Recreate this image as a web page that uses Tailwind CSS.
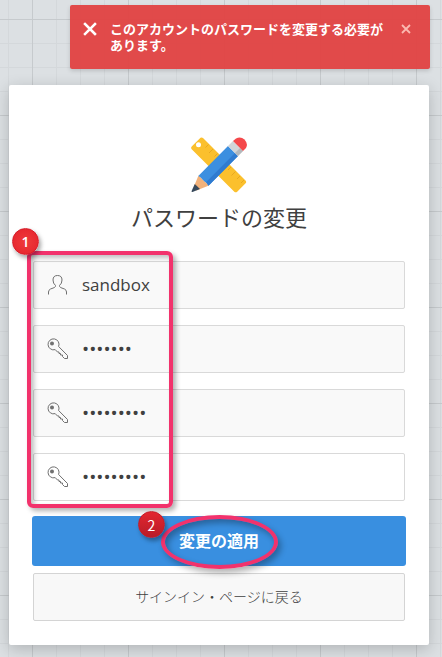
<!DOCTYPE html>
<html lang="ja">
<head>
<meta charset="utf-8">
<meta name="viewport" content="width=device-width, initial-scale=1">
<title>パスワードの変更</title>
<script src="https://cdn.jsdelivr.net/npm/@tailwindcss/browser@4"></script>
</head>
<body class="relative min-h-screen overflow-x-hidden bg-[#dce0e3] font-['Open_Sans','Noto_Sans_CJK_JP',sans-serif] text-[#404040]">

<!-- Graph-paper background -->
<svg class="absolute inset-0 -z-10 h-full w-full" aria-hidden="true">
  <defs>
    <pattern id="grid" x="32" y="19" width="96" height="96" patternUnits="userSpaceOnUse">
      <path d="M24.500 0V96M48.500 0V96M72.500 0V96M0 24.500H96M0 48.500H96M0 72.500H96" stroke="#d4d8db" fill="none"/>
      <path d="M.5 0V96M0 .5H96" stroke="#c6cacd" fill="none"/>
    </pattern>
  </defs>
  <rect width="100%" height="100%" fill="url(#grid)"/>
</svg>

<div class="pt-[5px] pr-3 pb-3 pl-[9px]">
  <div role="alert" class="ml-auto flex h-16 max-w-[360px] items-start rounded-[2px] bg-[#e04646]/98 py-4 pr-4 pl-3 text-white shadow-[0_2px_4px_rgba(0,0,0,0.15)]">
    <svg class="h-4 w-4 shrink-0" viewBox="0 0 16 16" aria-hidden="true"><path d="M3 3L13 13M13 3L3 13" stroke="#fff" stroke-width="2.500" stroke-linecap="square"/></svg>
    <p class="mr-3 ml-3 flex-1 text-[13px] leading-4 font-bold">このアカウントのパスワードを変更する必要があります。</p>
    <button type="button" aria-label="閉じる" class="h-4 w-4 shrink-0"><svg class="h-4 w-4" viewBox="0 0 16 16"><path d="M4 4L12 12M12 4L4 12" stroke="#fbb9b0" stroke-width="1.800"/></svg></button>
  </div>

  <main class="mt-4 max-w-[420px] rounded-[2px] bg-white p-6 shadow-[0_4px_16px_rgba(0,0,0,0.2)]">
    <svg class="mx-auto mt-7 h-14 w-14" viewBox="0 0 56 56" aria-hidden="true">
      <path fill="#fbc02d" fill-rule="evenodd" d="M.7 9.500L9.500 .8Q10.800 0 12 .9L54.500 43.500Q55.800 44.800 54.600 46.200L46.200 54.700Q44.800 56 43.300 54.700L.7 12.200Q-.5 10.800 .7 9.500ZM7.500 5.200a2.500 2.500 0 1 0 0 5 2.500 2.500 0 1 0 0-5Z"/>
      <path stroke="#e8a820" fill="none" d="M17.500 7.500l-3 3M22 12l-4 4M26.500 16.500l-3 3M40 30l-3 3M44.500 34.500l-4 4M49 39l-3 3M53 43l-3 3"/>
      <path fill="#f3b27a" d="M7.500 38.500L18 48.500 5.500 53.500 2.500 50.500Z"/>
      <path fill="#394a5c" d="M3.800 47L9 52 1.500 55Q.2 55.200 .6 54Z"/>
      <path fill="#3c8fe0" d="M37 9L47 19 17.500 48.700Q16 45.500 13.500 44.500L11.500 42.500Q10 40 7.300 38.900Z"/>
      <path fill="#2f7bd0" d="M44 16L47 19 17.500 48.700 15 45.200Z"/>
      <path fill="#d2d5d8" d="M42 4L52 14 47 19 37 9Z"/>
      <path fill="#b4b8bc" d="M49 11L52 14 47 19 44 16Z"/>
      <path fill="#f4484b" d="M42 4L45 1.500Q49.500-1 53.500 2.500 57.500 7 55 11L52 14Z"/>
    </svg>
    <h1 class="mt-2 text-center text-[22px] leading-8 font-normal">パスワードの変更</h1>

    <form class="mt-7" onsubmit="return false">
      <div class="flex flex-col gap-4">
        <div class="flex h-12 items-center rounded-[2px] border border-[#d9d9d9] bg-[#f9f9f9] pl-3">
          <label for="user" aria-label="ユーザー名"><svg class="h-6 w-6" viewBox="0 0 24 24" fill="none" stroke="#707070" aria-hidden="true"><path d="M2.500 21.500V19Q2.500 17 4.500 16L8.500 14.500Q9.500 14 9.500 12.500Q7 10.500 7 7Q7 2.500 11.500 2.500Q16 2.500 16 7Q16 10.500 13.500 12.500Q13.500 14 14.500 14.500L18.500 16Q20.500 17 20.500 19V21.500"/></svg></label>
          <input id="user" type="text" value="sandbox" readonly class="ml-3 min-w-0 flex-1 bg-transparent text-[17px] leading-6 outline-none">
        </div>
        <div class="flex h-12 items-center rounded-[2px] border border-[#d9d9d9] bg-[#f9f9f9] pl-3">
          <label for="current" aria-label="現在のパスワード"><svg class="h-6 w-6" viewBox="0 0 24 24" fill="none" stroke="#707070" aria-hidden="true"><path d="M12.600 9.500A5.500 5.500 0 1 0 9.200 12.600L11.500 15H13V16.500H14.500V18H16.500V19.500L18.500 21.500H21.500V18.500Z"/><circle cx="6" cy="6.500" r="2" fill="#707070" stroke="none"/></svg></label>
          <input id="current" type="password" value="sandbox" class="ml-3 min-w-0 flex-1 bg-transparent text-[19px] leading-6 outline-none">
        </div>
        <div class="flex h-12 items-center rounded-[2px] border border-[#d9d9d9] bg-[#f9f9f9] pl-3">
          <label for="new" aria-label="新規パスワード"><svg class="h-6 w-6" viewBox="0 0 24 24" fill="none" stroke="#707070" aria-hidden="true"><path d="M12.600 9.500A5.500 5.500 0 1 0 9.200 12.600L11.500 15H13V16.500H14.500V18H16.500V19.500L18.500 21.500H21.500V18.500Z"/><circle cx="6" cy="6.500" r="2" fill="#707070" stroke="none"/></svg></label>
          <input id="new" type="password" value="password1" class="ml-3 min-w-0 flex-1 bg-transparent text-[19px] leading-6 outline-none">
        </div>
        <div class="flex h-12 items-center rounded-[2px] border border-[#d9d9d9] bg-white pl-3">
          <label for="confirm" aria-label="パスワードの確認"><svg class="h-6 w-6" viewBox="0 0 24 24" fill="none" stroke="#707070" aria-hidden="true"><path d="M12.600 9.500A5.500 5.500 0 1 0 9.200 12.600L11.500 15H13V16.500H14.500V18H16.500V19.500L18.500 21.500H21.500V18.500Z"/><circle cx="6" cy="6.500" r="2" fill="#707070" stroke="none"/></svg></label>
          <input id="confirm" type="password" value="password1" class="ml-3 min-w-0 flex-1 bg-transparent text-[19px] leading-6 outline-none">
        </div>
      </div>
      <div class="-mx-px mt-[15px]">
        <button type="submit" class="block h-[50px] w-full rounded-[3px] bg-[#398fe0] text-base font-bold text-white">変更の適用</button>
      </div>
      <a href="#" class="mt-[7px] flex h-12 items-center justify-center rounded-[2px] border border-[#d4d4d4] bg-[#f8f8f8] text-sm font-light">サインイン・ページに戻る</a>
    </form>
  </main>
</div>

<!-- Step annotations -->
<div class="pointer-events-none absolute top-[251px] left-[27px] h-[257px] w-[146px] rounded-[6px] border-4 border-[#f2326c] shadow-[3px_3px_5px_rgba(0,0,0,0.3),inset_3px_3px_5px_rgba(0,0,0,0.25)]"></div>
<div class="pointer-events-none absolute top-[515px] left-[161px] h-[54px] w-[117px] rounded-[50%] border-4 border-[#f2326c] shadow-[3px_4px_6px_rgba(0,0,0,0.3),inset_3px_4px_6px_rgba(0,0,0,0.3)]"></div>
<div class="absolute top-[228px] left-[12px] flex h-[27px] w-[27px] items-center justify-center rounded-full border border-[#d51c28] bg-radial from-[#ee3a3a] to-[#e51f2b] text-sm font-semibold text-white shadow-[2px_3px_4px_rgba(0,0,0,0.35)]">1</div>
<div class="absolute top-[511px] left-[138px] flex h-[27px] w-[27px] items-center justify-center rounded-full border border-[#c41c28] bg-linear-to-b from-[#e32630] to-[#b81c28] font-['Noto_Sans_CJK_JP',sans-serif] text-sm text-white shadow-[2px_3px_4px_rgba(0,0,0,0.35)]">2</div>
</body>
</html>
